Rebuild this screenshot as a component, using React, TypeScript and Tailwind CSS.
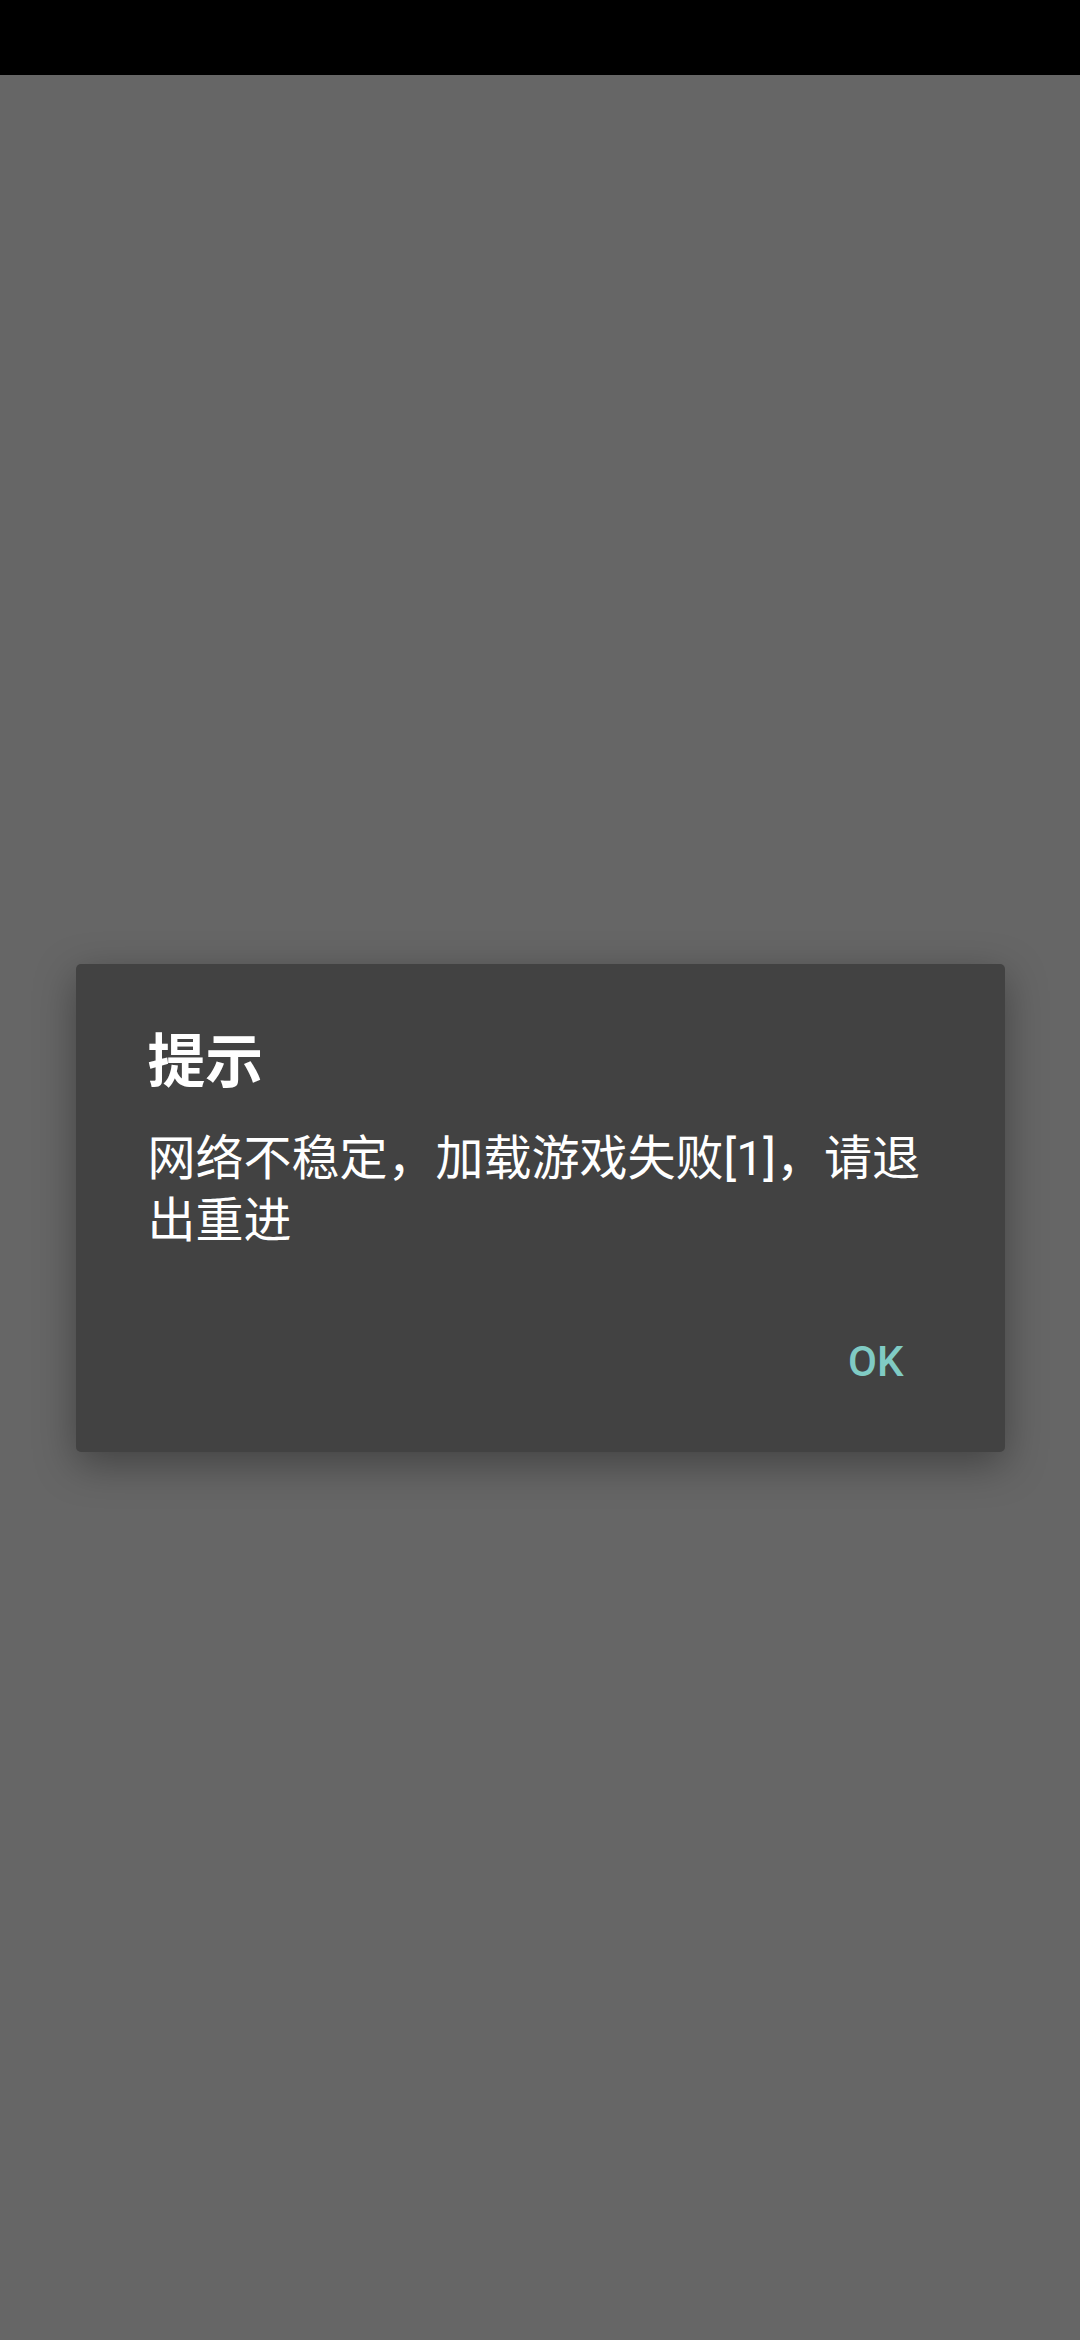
import React from "react";

export default function App() {
  return (
    <div className="w-[1080px] h-[2340px] flex flex-col bg-[#666666] font-['Roboto','Noto_Sans_CJK_SC',sans-serif]">
      <div className="h-[75px] bg-black shrink-0" />
      <div className="flex-1 flex items-center justify-center">
        <div className="w-[929px] bg-[#424242] rounded-[5px] shadow-[0_12px_40px_rgba(0,0,0,0.35)] flex flex-col pt-[64px] pb-[66px]">
          <div className="px-[72px] text-white text-[57.75px] leading-[69px] font-bold">提示</div>
          <div className="px-[72px] mt-[31px] text-white text-[48px] leading-[62px]">
            网络不稳定，加载游戏失败[1]，请退出重进
          </div>
          <div className="mt-[86px] flex justify-end pr-[101px]">
            <span className="text-[#80cbc4] text-[42px] leading-[48px] font-medium">OK</span>
          </div>
        </div>
      </div>
    </div>
  );
}
